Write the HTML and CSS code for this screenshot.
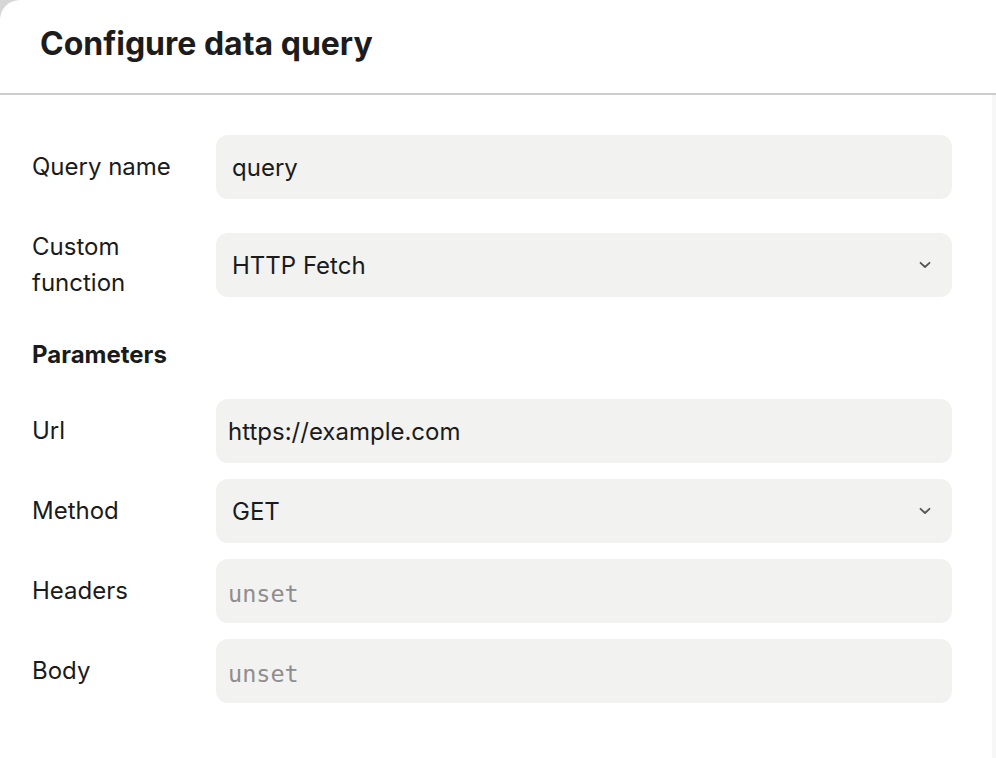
FILE: index.html
```html
<!DOCTYPE html>
<html lang="en">
<head>
    <meta charset="UTF-8">
    <meta name="viewport" content="width=device-width, initial-scale=1.0">
    <title>Configure data query</title>
    <link rel="stylesheet" href="styles.css">
</head>
<body>
    <div class="dialog">
        <div class="dialog-header">
            <h1>Configure data query</h1>
        </div>

        <div class="dialog-body">
            <form class="query-form">
                <div class="field-row">
                    <label for="queryName">Query name</label>
                    <input type="text" id="queryName" class="field" value="query">
                </div>

                <div class="field-row row-wide">
                    <label>Custom function</label>
                    <div class="field select">
                        <span>HTTP Fetch</span>
                        <svg width="12" height="8" viewBox="0 0 12 8"><path d="M1.5 1.8 L6 6 L10.5 1.8" fill="none" stroke="#555" stroke-width="1.8" stroke-linecap="round" stroke-linejoin="round"/></svg>
                    </div>
                </div>

                <h3 class="section-title">Parameters</h3>

                <div class="params">
                    <div class="field-row">
                        <label for="url">Url</label>
                        <input type="text" id="url" class="field code" value="https://example.com">
                    </div>

                    <div class="field-row">
                        <label>Method</label>
                        <div class="field select">
                            <span>GET</span>
                            <svg width="12" height="8" viewBox="0 0 12 8"><path d="M1.5 1.8 L6 6 L10.5 1.8" fill="none" stroke="#555" stroke-width="1.8" stroke-linecap="round" stroke-linejoin="round"/></svg>
                        </div>
                    </div>

                    <div class="field-row">
                        <label for="headers">Headers</label>
                        <input type="text" id="headers" class="field code mono" placeholder="unset">
                    </div>

                    <div class="field-row">
                        <label for="body">Body</label>
                        <input type="text" id="body" class="field code mono" placeholder="unset">
                    </div>
                </div>
            </form>
            <div class="scroll-track"></div>
        </div>
    </div>
</body>
</html>
```

FILE: styles.css
```css
/* Page */
html, body {
    margin: 0;
    padding: 0;
    height: 100%;
    background: #d6d6d6;
    font-family: 'Inter', 'Noto Sans', sans-serif;
    color: #1b1b1b;
}

.dialog {
    background: #fff;
    height: 100%;
    border-top-left-radius: 20px;
    display: flex;
    flex-direction: column;
}

/* Header */
.dialog-header {
    height: 87px;
    padding-bottom: 6px;
    border-bottom: 2px solid #cdcdcd;
    display: flex;
    align-items: center;
    padding-left: 40px;
}

.dialog-header h1 {
    margin: 0;
    font-size: 32px;
    font-weight: 700;
    color: #1c1c1c;
}

/* Body */
.dialog-body {
    flex: 1;
    display: flex;
}

.query-form {
    flex: 1;
    padding: 40px 40px 0 32px;
}

.scroll-track {
    width: 4px;
    background: #f7f7f7;
}

.field-row {
    display: flex;
    align-items: center;
    gap: 24px;
}

.field-row label {
    width: 160px;
    flex-shrink: 0;
    font-size: 24px;
    line-height: 36px;
}

.row-wide {
    margin-top: 30px;
}

.field {
    flex: 1;
    height: 64px;
    box-sizing: border-box;
    border: none;
    border-radius: 12px;
    background: #f2f2f1;
    padding: 0 16px;
    font-family: 'Inter', 'Noto Sans', sans-serif;
    font-size: 24px;
    color: #1b1b1b;
    outline: none;
}

.field.code {
    padding-left: 12px;
}

.field.mono {
    font-family: 'DejaVu Sans Mono', 'Liberation Mono', monospace;
    font-size: 23.5px;
    padding-top: 5px;
}

.field.mono::placeholder {
    color: #8e8e8e;
}

.select {
    display: flex;
    align-items: center;
    justify-content: space-between;
    padding-right: 21px;
}

.section-title {
    margin: 36px 0 26px;
    font-size: 24px;
    font-weight: 700;
    line-height: 36px;
}

.params {
    display: flex;
    flex-direction: column;
    gap: 16px;
}
```
